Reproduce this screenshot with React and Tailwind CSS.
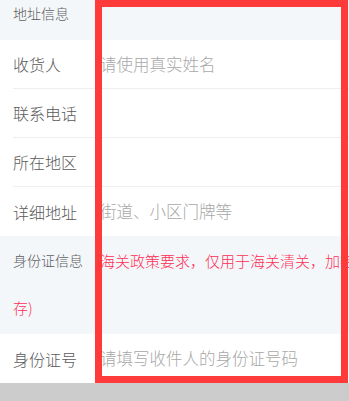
import React from "react";

const font = { fontFamily: '"Noto Sans CJK SC", "Noto Sans", sans-serif' };

function Row({ label, placeholder, border = true }) {
  return (
    <div className="pl-[13px] bg-white">
      <div className={`flex items-center h-[49px] ${border ? "border-b border-[#eeeeee]" : ""}`}>
        <div className="w-[87px] shrink-0 text-[16px] font-light text-[#5a5a5a]">{label}</div>
        <div className="text-[16.5px] font-light text-[#a8a8a8] whitespace-nowrap">{placeholder}</div>
      </div>
    </div>
  );
}

export default function App() {
  return (
    <div className="relative w-[349px] h-[401px] overflow-hidden bg-white" style={font}>
      <div className="h-[40px] bg-[#f4f7fa] pl-[13px] pt-[2px] text-[14px] leading-[22px] font-light text-[#5f5f5f]">
        地址信息
      </div>
      <Row label="收货人" placeholder="请使用真实姓名" />
      <Row label="联系电话" placeholder="" />
      <Row label="所在地区" placeholder="" />
      <Row label="详细地址" placeholder="街道、小区门牌等" border={false} />
      <div className="bg-[#f4f7fa] pl-[13px] h-[98px] leading-[49px] font-light">
        <div className="flex items-center whitespace-nowrap">
          <span className="w-[87px] shrink-0 text-[14px] text-[#5f5f5f]">身份证信息</span>
          <span className="text-[15px] text-[#ff2e55]">海关政策要求，仅用于海关清关，加密保</span>
        </div>
        <div className="text-[15px] leading-[45px] text-[#ff2e55]">存)</div>
      </div>
      <Row label="身份证号" placeholder="请填写收件人的身份证号码" border={false} />
      <div className="h-[19px] bg-[#cccccc]" />
      <div className="absolute left-[95px] top-0 w-[253px] h-[383px] border-[7px] border-[#ff3a3a] pointer-events-none" />
    </div>
  );
}
